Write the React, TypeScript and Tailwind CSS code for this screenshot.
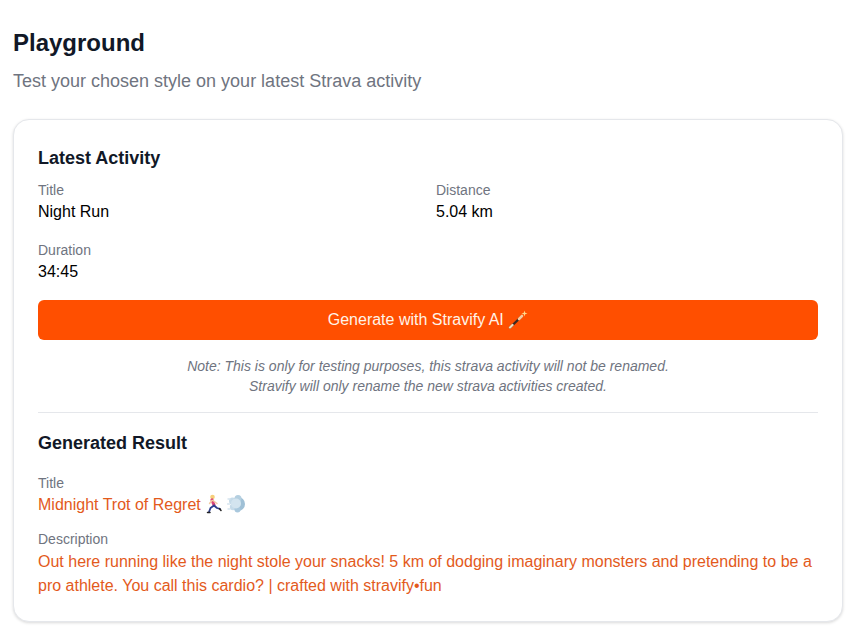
function WandIcon() {
  return (
    <svg width="20" height="20" viewBox="0 0 20 20" className="inline-block align-[-4px]">
      <path d="M2 18.5 13 8" stroke="#3a2a22" strokeWidth="2.4" strokeLinecap="round" />
      <path d="M2 18.5 4.5 16" stroke="#f3d9b8" strokeWidth="2.4" strokeLinecap="round" />
      <path d="M11 10 14 7" stroke="#f5c9a0" strokeWidth="2.6" strokeLinecap="round" />
      <path d="M16.5 1.5 17.2 3.8 19.5 4.5 17.2 5.2 16.5 7.5 15.8 5.2 13.5 4.5 15.8 3.8Z" fill="#ffd98a" />
    </svg>
  );
}

function RunnerIcon() {
  return (
    <svg width="18" height="20" viewBox="0 0 18 20" className="inline-block align-[-4px]">
      <circle cx="7.5" cy="3" r="2.3" fill="#f6cf7a" />
      <path d="M7 6 9 11" stroke="#d9467a" strokeWidth="3.2" strokeLinecap="round" />
      <path d="M7 6.5 4.5 9.5M8 6.5 12 9.5" stroke="#f3c9a0" strokeWidth="1.4" strokeLinecap="round" />
      <path d="M9 11.5 5.5 14 4 18" stroke="#2f3f8f" strokeWidth="1.8" strokeLinecap="round" strokeLinejoin="round" fill="none" />
      <path d="M9 11.5 12 14 15 15" stroke="#2f3f8f" strokeWidth="1.8" strokeLinecap="round" strokeLinejoin="round" fill="none" />
      <path d="M2.5 18.5H5M14.5 14.5 16 16.5" stroke="#222" strokeWidth="1.5" strokeLinecap="round" />
    </svg>
  );
}

function DashIcon() {
  return (
    <svg width="19" height="20" viewBox="0 0 19 20" className="ml-[4px] inline-block align-[-4px]">
      <circle cx="11" cy="10" r="7" fill="#9fc0d6" />
      <circle cx="5.5" cy="7" r="3.5" fill="#c6dbe9" />
      <circle cx="6" cy="13" r="3.2" fill="#c6dbe9" />
      <circle cx="11" cy="4.5" r="3.5" fill="#b4cfe0" />
      <circle cx="10.5" cy="15.5" r="3" fill="#a9c8dd" />
      <circle cx="9" cy="9.5" r="5" fill="#d3e4ef" />
      <path d="M1 5H3M0.5 10H2.5M1 15H3" stroke="#d5e4ee" strokeWidth="1.4" strokeLinecap="round" />
    </svg>
  );
}

function Field({ label, value }: { label: string; value: string }) {
  return (
    <div>
      <p className="text-sm leading-5 text-[#6f7480]">{label}</p>
      <p className="text-base leading-6 text-black">{value}</p>
    </div>
  );
}

export default function App() {
  return (
    <div className="min-h-[641px] bg-white px-[13px] pt-[25px] font-['Liberation_Sans',Arial,sans-serif]">
      <h1 className="text-2xl leading-9 font-bold text-[#111827]">Playground</h1>
      <p className="mt-[6px] mb-[24px] text-lg leading-7 text-[#6f7480]">
        Test your chosen style on your latest Strava activity
      </p>

      <div className="h-[503px] rounded-2xl border border-[#e5e7eb] bg-white px-6 pt-[24px] shadow-[0_1px_3px_rgba(0,0,0,0.15)]">
        <h2 className="text-lg leading-7 font-bold text-[#111827]">Latest Activity</h2>

        <div className="mt-2 grid grid-cols-2 gap-x-4 gap-y-4">
          <Field label="Title" value="Night Run" />
          <Field label="Distance" value="5.04 km" />
          <Field label="Duration" value="34:45" />
        </div>

        <button className="mt-4 flex h-10 w-full items-center justify-center rounded-md bg-[#ff4f00] text-base text-[#fff3e8]">
          <span>
            Generate with Stravify AI <WandIcon />
          </span>
        </button>

        <p className="mt-4 text-center text-sm leading-5 text-[#6f7480] italic">
          Note: This is only for testing purposes, this strava activity will not be renamed.
          <br />
          Stravify will only rename the new strava activities created.
        </p>

        <div className="mt-4 border-t border-[#e5e7eb]" />

        <h2 className="mt-4 text-lg leading-7 font-bold text-[#111827]">Generated Result</h2>

        <div className="mt-4">
          <p className="text-sm leading-5 text-[#6f7480]">Title</p>
          <p className="text-base leading-6 text-[#e35a1c]">
            Midnight Trot of Regret <RunnerIcon />
            <DashIcon />
          </p>
        </div>

        <div className="mt-3">
          <p className="text-sm leading-5 text-[#6f7480]">Description</p>
          <p className="mt-px text-base leading-6 text-[#e35a1c]">
            Out here running like the night stole your snacks! 5 km of dodging imaginary monsters and
            pretending to be a pro athlete. You call this cardio? | crafted with stravify•fun
          </p>
        </div>
      </div>
    </div>
  );
}
